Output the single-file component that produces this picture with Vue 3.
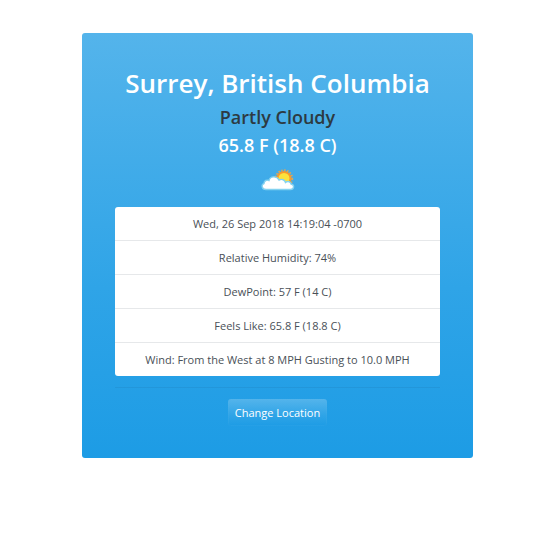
<script setup>
const details = [
  'Wed, 26 Sep 2018 14:19:04 -0700',
  'Relative Humidity: 74%',
  'DewPoint: 57 F (14 C)',
  'Feels Like: 65.8 F (18.8 C)',
  'Wind: From the West at 8 MPH Gusting to 10.0 MPH',
]
</script>

<template>
  <main class="page">
    <section class="card">
      <h1 class="location">Surrey, British Columbia</h1>
      <h2 class="condition">Partly Cloudy</h2>
      <h2 class="temperature">65.8 F (18.8 C)</h2>
      <svg class="icon" viewBox="0 0 34 22" aria-hidden="true">
        <circle cx="23" cy="9.500" r="8.300" fill="none" stroke="#d9a75c" stroke-width="1.800" stroke-dasharray="1.6 1.4" />
        <circle cx="23" cy="9.500" r="7.500" fill="#f89a2c" />
        <circle cx="23" cy="9.500" r="5.500" fill="#fde23c" />
        <path
          d="M5 20.500 C0.500 20.500 0 15.500 3 14.500 C3 11.500 6 10.500 8 11.500 C9 7 16 6.500 18 11 C21 9.500 24 11 24.500 13.500 C27 11.500 30 13 30 15 C34 16 33 20.500 29.500 20.500 Z"
          fill="#fff"
          stroke="#83d2f0"
          stroke-width="1.400"
        />
      </svg>
      <ul class="details">
        <li v-for="line in details" :key="line" class="detail">{{ line }}</li>
      </ul>
      <hr class="divider" />
      <button type="button" class="change">Change Location</button>
    </section>
  </main>
</template>

<style>
body {
  margin: 0;
  background: #fff;
}
</style>

<style scoped>
.page {
  padding: 33px 77px 33px 82px;
  font-family: "Segoe UI", "Open Sans", "Noto Sans", sans-serif;
}

.card {
  display: flex;
  flex-direction: column;
  align-items: center;
  padding: 32px 33px;
  border-radius: 3px;
  background: linear-gradient(#54b4eb, #2fa4e7 60%, #1d9ce5);
  text-align: center;
}

.location,
.condition,
.temperature {
  margin: 0;
  font-weight: 600;
  color: #fff;
}

.location {
  font-size: 26px;
  line-height: 36px;
}

.condition,
.temperature {
  font-size: 18px;
  line-height: 28px;
}

.condition {
  padding-top: 2px;
  color: #2d3a42;
}

.icon {
  width: 34px;
  height: 22px;
  margin: 10px 0 16px;
}

.details {
  align-self: stretch;
  margin: 0;
  padding: 0;
  overflow: hidden;
  border-radius: 3px;
  background: #fff;
  list-style: none;
}

.detail {
  padding: 8px 12px;
  font-size: 11px;
  line-height: 17px;
  color: #495057;
}

.detail + .detail {
  border-top: 1px solid #e6e8ea;
}

.divider {
  align-self: stretch;
  height: 1px;
  margin: 11px 0;
  border: 0;
  background: rgba(0, 0, 0, 0.05);
}

.change {
  padding: 4px 6px;
  border: 1px solid rgba(84, 180, 235, 0.15);
  border-radius: 3px;
  background: linear-gradient(#54b4eb, #2fa4e7 60%, #1d9ce5) border-box;
  font-family: inherit;
  font-size: 11px;
  line-height: 17px;
  color: #fff;
  cursor: pointer;
}
</style>
